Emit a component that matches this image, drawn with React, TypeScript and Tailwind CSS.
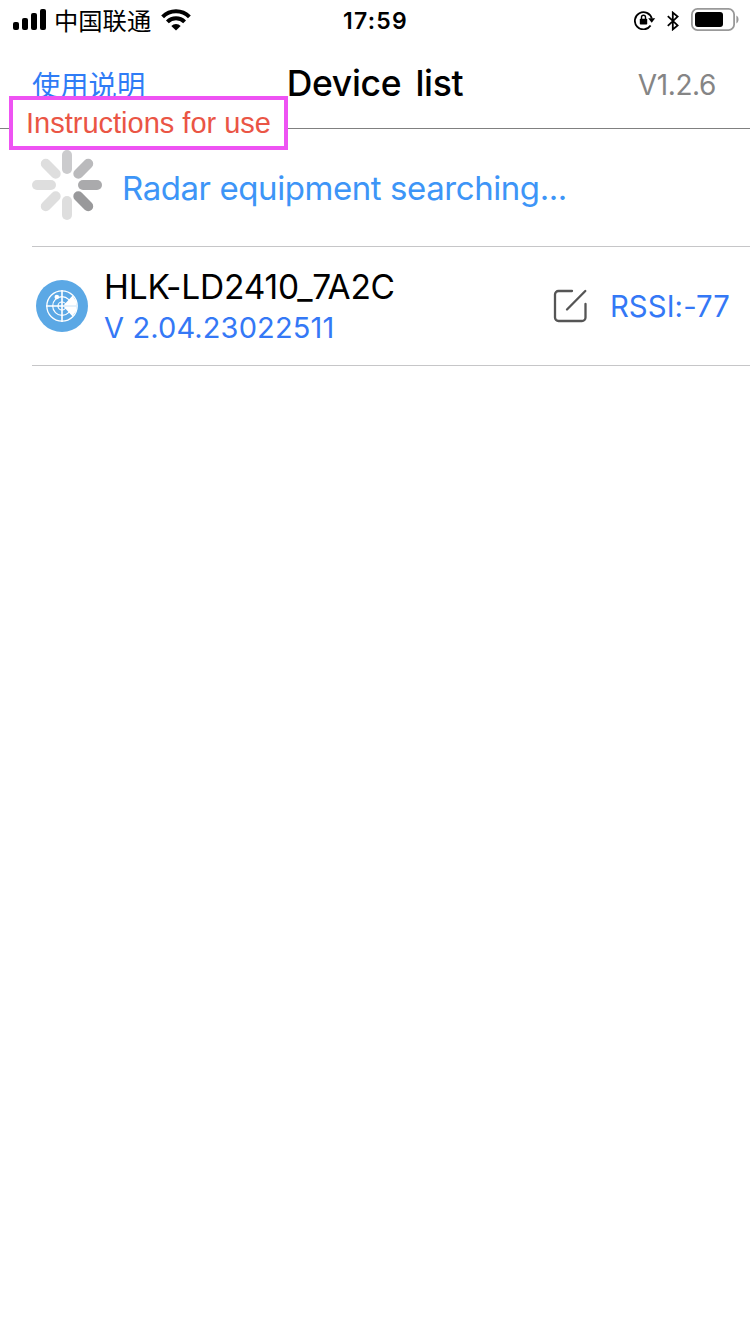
import React from 'react';

const sans = "font-['Inter','Noto_Sans_CJK_SC',sans-serif]";

function SignalIcon() {
  return (
    <svg className="block h-[22px] w-[33px]" viewBox="0 0 33 22">
      <rect x="0" y="13" width="6" height="8" rx="2" />
      <rect x="9" y="9" width="6" height="12" rx="2" />
      <rect x="18" y="4" width="6" height="17" rx="2" />
      <rect x="27" y="0" width="6" height="21" rx="2" />
    </svg>
  );
}

function WifiIcon() {
  return (
    <svg className="block h-[22px] w-[30px]" viewBox="0 0 30 22" fill="none" stroke="#000" strokeWidth="4">
      <path d="M1.600 7.900a19 19 0 0 1 26.800 0" />
      <path d="M6.400 12.900a12.200 12.200 0 0 1 17.200 0" />
      <path d="M15 21.600l-4.700-4.600a6.600 6.600 0 0 1 9.400 0z" fill="#000" stroke="none" />
    </svg>
  );
}

function LockIcon() {
  return (
    <svg className="block h-[20px] w-[22px]" viewBox="0 0 22 20" fill="none" stroke="#000" strokeWidth="1.8">
      <path d="M16.600 15.600A8.600 8.600 0 1 1 17.800 8.600" />
      <path d="M14.200 8.200h7l-3.500 4.500z" fill="#000" stroke="none" />
      <rect x="5.800" y="8.800" width="7.400" height="5.800" rx="0.8" fill="#000" stroke="none" />
      <path d="M7.500 9V7.300a2 2 0 0 1 4 0V9" strokeWidth="1.4" />
    </svg>
  );
}

function BluetoothIcon() {
  return (
    <svg className="block h-[20px] w-[12px]" viewBox="0 0 12 20" fill="none" stroke="#000" strokeWidth="1.8">
      <path d="M0.8 5.200l9.800 9.200-4.800 4V1.600l4.800 4-9.800 9.200" />
    </svg>
  );
}

function BatteryIcon() {
  return (
    <svg className="block h-[24px] w-[48px]" viewBox="0 0 48 24">
      <rect x="0.9" y="0.9" width="42.200" height="21.200" rx="5.600" fill="none" stroke="#999" strokeWidth="1.8" />
      <rect x="4" y="4" width="28" height="15" rx="3" />
      <path d="M45.400 7.600c2.800 1.400 2.800 6.400 0 7.800z" fill="#999" />
    </svg>
  );
}

const spokes = [
  { angle: 0, color: '#cbcbcd' },
  { angle: 45, color: '#bababc' },
  { angle: 90, color: '#aaaaac' },
  { angle: 135, color: '#99999b' },
  { angle: 180, color: '#dedede' },
  { angle: 225, color: '#dedede' },
  { angle: 270, color: '#dedede' },
  { angle: 315, color: '#dedede' },
];

function Spinner() {
  return (
    <svg className="block h-[70px] w-[70px] shrink-0" viewBox="0 0 70 70">
      {spokes.map((s) => (
        <rect key={s.angle} x="30" y="0" width="10" height="24" rx="5" fill={s.color} transform={`rotate(${s.angle} 35 35)`} />
      ))}
    </svg>
  );
}

function RadarIcon() {
  return (
    <svg className="block h-[52px] w-[52px] shrink-0" viewBox="0 0 52 52" fill="none" stroke="#fff">
      <circle cx="26" cy="26" r="26" fill="#5ba8e5" stroke="none" />
      <circle cx="26" cy="26" r="15.200" strokeWidth="1.3" />
      <circle cx="26" cy="26" r="9.300" strokeWidth="1.2" />
      <circle cx="26" cy="26" r="4" strokeWidth="1.2" />
      <path d="M26 10v32M10 26h32" strokeWidth="1.6" />
      <path d="M27 26l9.600-10.400q1.500 3 4 6v8.800q-2.500 3-4 6z" fill="#fff" stroke="none" />
      <circle cx="20.800" cy="17" r="2.300" fill="#fff" stroke="none" />
      <path d="M27 26h15" stroke="#c8e2f7" strokeWidth="1" />
    </svg>
  );
}

function EditIcon() {
  return (
    <svg className="block h-[34px] w-[34px]" viewBox="0 0 34 34" fill="none" stroke="#555" strokeWidth="2.300" strokeLinecap="round">
      <path d="M19 2H5.500a3.500 3.500 0 0 0-3.500 3.500v23a3.500 3.500 0 0 0 3.500 3.500h23.500a3.500 3.500 0 0 0 3.500-3.500V15" />
      <path d="M14 20.500L32.300 2" />
    </svg>
  );
}

export default function App() {
  return (
    <div className={`relative flex h-[1334px] w-[750px] flex-col overflow-hidden bg-white text-black ${sans}`}>
      <header className="grid h-[40px] grid-cols-[1fr_auto_1fr] items-center pl-[13px] pr-[11px]">
        <div className="flex items-center">
          <SignalIcon />
          <span className="ml-[8px] mt-[2px] whitespace-nowrap text-[24.300px] leading-none">中国联通</span>
          <span className="ml-[10px]"><WifiIcon /></span>
        </div>
        <span className="mr-[1px] mt-[2px] text-[23px] font-semibold leading-none tracking-[1.300px]">17:59</span>
        <div className="flex items-center justify-end">
          <LockIcon />
          <span className="ml-[11px] mt-[2px]"><BluetoothIcon /></span>
          <span className="ml-[12px]"><BatteryIcon /></span>
        </div>
      </header>

      <nav className="grid h-[89px] grid-cols-[1fr_auto_1fr] items-center border-b border-[#808080] pl-[32px] pr-[34px]">
        <a className="mt-[4px] whitespace-nowrap text-[28.300px] leading-none text-[#2f7cf6]">使用说明</a>
        <h1 className="mb-[1px] ml-[2px] whitespace-nowrap text-[35.500px] font-[450] leading-none tracking-[-0.300px] [word-spacing:5px]">Device list</h1>
        <span className="mt-[1px] justify-self-end whitespace-nowrap text-[28px] leading-none tracking-[-0.400px] text-[#858585]">V1.2.6</span>
      </nav>

      <main className="pl-[32px]">
        <section className="flex h-[118px] items-center border-b border-[#c6c6c8] pb-[5px]">
          <Spinner />
          <span className="ml-[20px] mt-[6px] whitespace-nowrap text-[33px] leading-none tracking-[-0.430px] text-[#3d95f7]">Radar equipment searching...</span>
        </section>
        <section className="flex h-[119px] items-center border-b border-[#c6c6c8] pl-[4px] pr-[20px]">
          <RadarIcon />
          <div className="ml-[16px] mt-[1px] flex flex-col gap-[9px]">
            <span className="whitespace-nowrap text-[33.500px] leading-none tracking-[-0.210px]">HLK-LD2410_7A2C</span>
            <span className="whitespace-nowrap text-[29px] leading-none tracking-[0.130px] text-[#3478f6]">V 2.04.23022511</span>
          </div>
          <span className="ml-auto"><EditIcon /></span>
          <span className="ml-[23px] mt-[2px] whitespace-nowrap text-[29.300px] leading-none tracking-[0.100px] text-[#3478f6]">RSSI:-77</span>
        </section>
      </main>

      <div className="absolute left-[9px] top-[96px] flex h-[54px] w-[279px] items-center border-4 border-[#ee53f3] bg-white pl-[13px]">
        <span className="whitespace-nowrap font-['Liberation_Sans',sans-serif] text-[29px] leading-none text-[#ea5545]">Instructions for use</span>
      </div>
    </div>
  );
}
